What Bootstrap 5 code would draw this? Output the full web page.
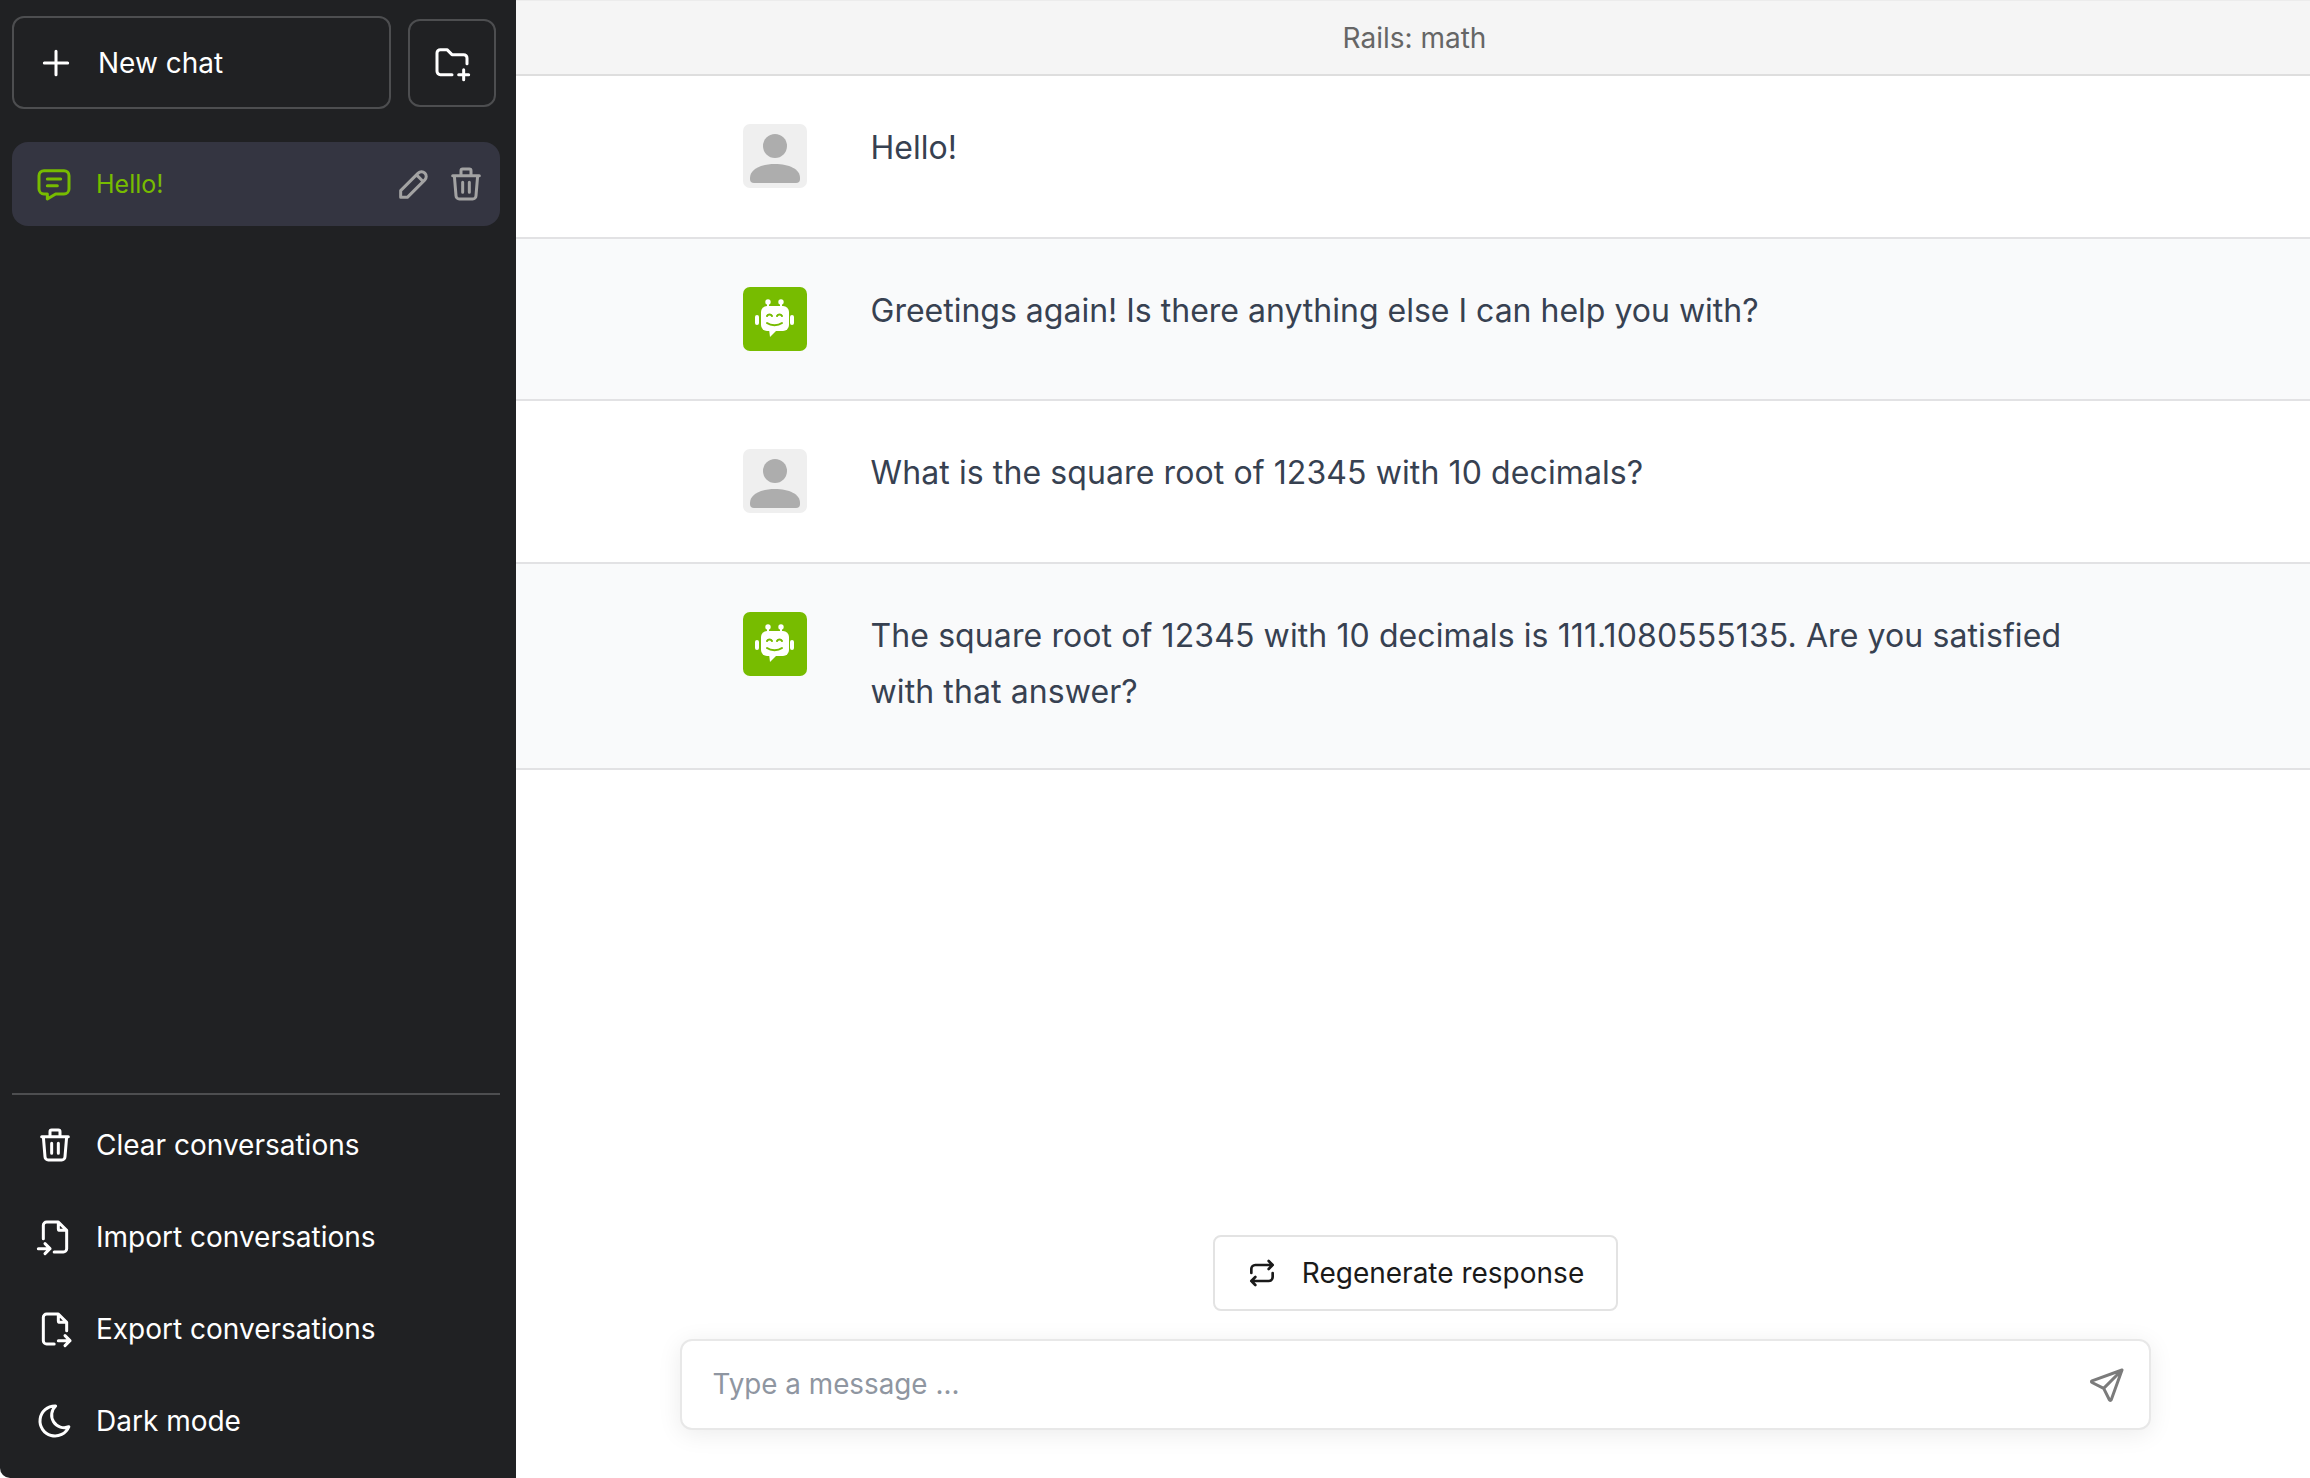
<!DOCTYPE html>
<html lang="en">

<head>
    <meta charset="UTF-8">
    <title>Chat</title>
    <link href="https://cdn.jsdelivr.net/npm/bootstrap@5.3.0/dist/css/bootstrap.min.css" rel="stylesheet">
    <style>
        html, body { height: 100%; }
        body { font-family: Inter, "Liberation Sans", sans-serif; color: #374151; overflow: hidden; }
        .ico { width: 40px; height: 40px; fill: none; stroke: currentColor; stroke-width: 1.8; stroke-linecap: round; stroke-linejoin: round; flex: none; }
        .side-bar { width: 516px; background: #202123; color: #fff; padding: 12px 16px 0 12px; border-bottom-left-radius: 10px; }
        .new-btn { width: 379px; height: 93px; padding: 0 0 0 22px; gap: 22px; border: 2px solid #4d4e50; border-radius: 12px; font-size: 28px; color: #fff; background: none; }
        .folder-btn { width: 88px; height: 88px; margin-left: 17px; padding: 0; border: 2px solid #4d4e50; border-radius: 12px; color: #fff; background: none; }
        .chat-item { height: 84px; margin-top: 33px; padding: 0 14px 0 22px; background: #343541; border-radius: 16px; color: #77bc00; font-size: 25px; }
        .chat-item .label { margin-left: 22px; padding-top: 2px; }
        .chat-item .acts { color: #a3a3a3; gap: 12px; }
        .menu-wrap { border-top: 2px solid #4d4e50; padding: 4px 0 11px; }
        .menu-row { height: 92px; padding-left: 23px; gap: 21px; font-size: 28px; color: #fff; }
        .top-bar { height: 76px; padding-left: 3px; background: #f5f5f5; border-top: 1px solid #ececec; border-bottom: 2px solid #dedede; font-size: 28px; color: #666; }
        .msg-row { padding: 48px 0 48.5px; border-bottom: 2px solid #e2e2e4; background: #fff; }
        .msg-row.alt { background: #f9fafb; }
        .msg-inner { width: 1341px; margin: 0 auto; gap: 64px; }
        .avatar { width: 64px; height: 64px; border-radius: 7px; }
        .avatar.user { background: #efefef; }
        .avatar.bot { background: #77bc00; }
        .msg-text { font-size: 32px; line-height: 56px; margin-top: -4px; width: 1213px; }
        .msg-text.has-num { letter-spacing: .1px; }
        .bottom-area { padding-left: 4px; }
        .regen-btn { width: 405px; height: 76px; padding: 0; gap: 24px; border: 2px solid #e3e3e3; border-radius: 8px; background: #fff; color: #1a1a1a; font-size: 28px; }
        .regen-btn .ico { width: 32px; height: 32px; stroke-width: 2; }
        .input-box { width: 1471px; height: 91px; margin: 28px 0 48px; padding: 0 22px 0 31px; border: 2px solid #e8e8e8; border-radius: 12px; box-shadow: 0 4px 24px rgba(0,0,0,.08); font-size: 27.8px; color: #8f96a1; background: #fff; }
        .input-box .ico { color: #7b7b7b; }
    </style>
</head>

<body>
    <svg width="0" height="0" class="position-absolute">
        <symbol id="i-plus" viewBox="0 0 24 24"><path d="M12 5v14M5 12h14"/></symbol>
        <symbol id="i-folder" viewBox="0 0 24 24"><path d="M12 19h-7a2 2 0 0 1 -2 -2v-11a2 2 0 0 1 2 -2h4l3 3h7a2 2 0 0 1 2 2v3.5M16 19h6M19 16v6"/></symbol>
        <symbol id="i-msg" viewBox="0 0 24 24"><path d="M8 9h8M8 13h6M18 4a3 3 0 0 1 3 3v8a3 3 0 0 1 -3 3h-5l-5 3v-3h-2a3 3 0 0 1 -3 -3v-8a3 3 0 0 1 3 -3h12z"/></symbol>
        <symbol id="i-pencil" viewBox="0 0 24 24"><path d="M4 20h4l10.5 -10.5a2.828 2.828 0 1 0 -4 -4l-10.5 10.5v4M13.5 6.5l4 4"/></symbol>
        <symbol id="i-trash" viewBox="0 0 24 24"><path d="M4 7h16M10 11v6M14 11v6M5 7l1 12a2 2 0 0 0 2 2h8a2 2 0 0 0 2 -2l1 -12M9 7v-3a1 1 0 0 1 1 -1h4a1 1 0 0 1 1 1v3"/></symbol>
        <symbol id="i-import" viewBox="0 0 24 24"><path d="M14 3v4a1 1 0 0 0 1 1h4M5 13v-8a2 2 0 0 1 2 -2h7l5 5v11a2 2 0 0 1 -2 2h-5.500m-9.500 -2h7m-3 -3l3 3l-3 3"/></symbol>
        <symbol id="i-export" viewBox="0 0 24 24"><path d="M14 3v4a1 1 0 0 0 1 1h4M11.500 21h-4.500a2 2 0 0 1 -2 -2v-14a2 2 0 0 1 2 -2h7l5 5v5m-5 6h7m-3 -3l3 3l-3 3"/></symbol>
        <symbol id="i-moon" viewBox="0 0 24 24"><path d="M12 3c.132 0 .263 0 .393 0a7.500 7.500 0 0 0 7.920 12.446a9 9 0 1 1 -8.313 -12.454z"/></symbol>
        <symbol id="i-repeat" viewBox="0 0 24 24"><path d="M4 12v-3a3 3 0 0 1 3 -3h13m-3 -3l3 3l-3 3M20 12v3a3 3 0 0 1 -3 3h-13m3 3l-3 -3l3 -3"/></symbol>
        <symbol id="i-send" viewBox="0 0 24 24"><path d="M10 14l11 -11M21 3l-6.500 18a.55 .55 0 0 1 -1 0l-3.500 -7l-7 -3.500a.55 .55 0 0 1 0 -1l18 -6.500"/></symbol>
        <symbol id="i-user" viewBox="0 0 64 64"><circle cx="32" cy="22" r="12" fill="#adadad" stroke="none"/><path d="M7 54c0-9 11-14 25-14s25 5 25 14v1a4 4 0 0 1-4 4H11a4 4 0 0 1-4-4z" fill="#adadad"/></symbol>
        <symbol id="i-bot" viewBox="0 0 64 64">
            <g fill="#fff"><rect x="18" y="19" width="28" height="25" rx="6"/><path d="M26 42h9l-8 8z"/><rect x="12" y="28" width="4" height="10" rx="2"/><rect x="47" y="28" width="4" height="10" rx="2"/><circle cx="25" cy="15" r="2.700"/><circle cx="38" cy="15" r="2.700"/><rect x="24" y="15" width="2" height="6"/><rect x="37" y="15" width="2" height="6"/></g>
            <g fill="none" stroke="#77bc00" stroke-width="2" stroke-linecap="round"><path d="M24 29c1-2 4-2 5 0M34 29c1-2 4-2 5 0M24 36c4 3 11 3 15 0"/></g>
        </symbol>
    </svg>

    <div class="d-flex h-100">
        <!-- Sidebar -->
        <aside class="side-bar d-flex flex-column flex-shrink-0">
            <div class="d-flex align-items-center pt-1">
                <button class="new-btn d-flex align-items-center" type="button"><svg class="ico"><use href="#i-plus"/></svg>New chat</button>
                <button class="folder-btn d-flex align-items-center justify-content-center" type="button"><svg class="ico"><use href="#i-folder"/></svg></button>
            </div>
            <div class="chat-item d-flex align-items-center">
                <svg class="ico"><use href="#i-msg"/></svg>
                <span class="label flex-grow-1">Hello!</span>
                <div class="acts d-flex"><svg class="ico"><use href="#i-pencil"/></svg><svg class="ico"><use href="#i-trash"/></svg></div>
            </div>
            <div class="menu-wrap mt-auto">
                <div class="menu-row d-flex align-items-center"><svg class="ico"><use href="#i-trash"/></svg>Clear conversations</div>
                <div class="menu-row d-flex align-items-center"><svg class="ico"><use href="#i-import"/></svg>Import conversations</div>
                <div class="menu-row d-flex align-items-center"><svg class="ico"><use href="#i-export"/></svg>Export conversations</div>
                <div class="menu-row d-flex align-items-center"><svg class="ico"><use href="#i-moon"/></svg>Dark mode</div>
            </div>
        </aside>

        <!-- Content -->
        <main class="flex-grow-1 d-flex flex-column">
            <div class="top-bar d-flex align-items-center justify-content-center">Rails: math</div>
            <div class="flex-grow-1">
                <div class="msg-row">
                    <div class="msg-inner d-flex"><svg class="avatar user flex-shrink-0"><use href="#i-user"/></svg><div class="msg-text">Hello!</div></div>
                </div>
                <div class="msg-row alt">
                    <div class="msg-inner d-flex"><svg class="avatar bot flex-shrink-0"><use href="#i-bot"/></svg><div class="msg-text">Greetings again! Is there anything else I can help you with?</div></div>
                </div>
                <div class="msg-row">
                    <div class="msg-inner d-flex"><svg class="avatar user flex-shrink-0"><use href="#i-user"/></svg><div class="msg-text has-num">What is the square root of 12345 with 10 decimals?</div></div>
                </div>
                <div class="msg-row alt">
                    <div class="msg-inner d-flex"><svg class="avatar bot flex-shrink-0"><use href="#i-bot"/></svg><div class="msg-text has-num">The square root of 12345 with 10 decimals is 111.1080555135. Are you satisfied with that answer?</div></div>
                </div>
            </div>
            <div class="bottom-area d-flex flex-column align-items-center">
                <button class="regen-btn d-flex align-items-center justify-content-center" type="button"><svg class="ico"><use href="#i-repeat"/></svg>Regenerate response</button>
                <div class="input-box d-flex align-items-center justify-content-between">Type a message ...<svg class="ico"><use href="#i-send"/></svg></div>
            </div>
        </main>
    </div>

    <script src="https://cdn.jsdelivr.net/npm/bootstrap@5.3.0/dist/js/bootstrap.bundle.min.js"></script>
</body>

</html>
